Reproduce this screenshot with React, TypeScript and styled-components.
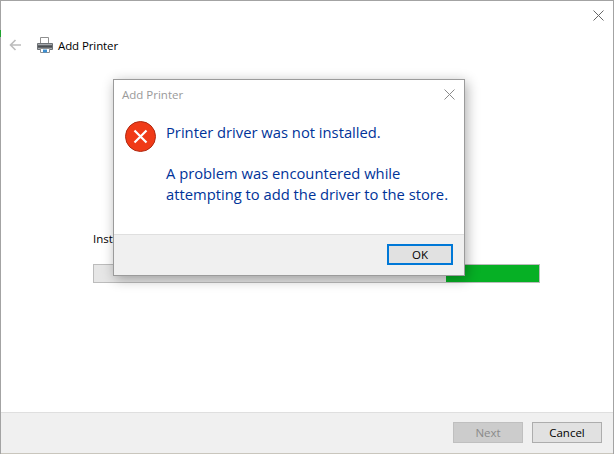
import React from "react";
import styled, { createGlobalStyle } from "styled-components";

const Global = createGlobalStyle`
  html, body { margin: 0; padding: 0; background: #fff; }
  #root { width: 614px; height: 454px; }
  * { box-sizing: border-box; }
`;

const Window = styled.div`
  position: relative;
  width: 614px;
  height: 454px;
  background: #fff;
  border: 1px solid #a3a3a3;
  border-bottom: 0;
  font-family: "Open Sans", "Noto Sans", sans-serif;
  color: #000;
  display: flex;
  flex-direction: column;
  overflow: visible;
`;

const EdgeMark = styled.div`
  position: absolute;
  left: -1px;
  top: 29px;
  width: 1px;
  height: 7px;
  background: #1fa32f;
`;

const TitleBar = styled.div`
  height: 30px;
  display: flex;
  justify-content: flex-end;
  align-items: flex-start;
  padding: 9px 9px 0 0;
`;

const CloseGlyph = styled.svg<{ $c: string }>`
  display: block;
  stroke: ${(p) => p.$c};
  fill: none;
`;

const Header = styled.div`
  height: 28px;
  display: flex;
  align-items: center;
  padding-left: 8px;
`;

const BackArrow = styled.svg`
  display: block;
  margin-right: 16px;
`;

const HeaderTitle = styled.span`
  font-size: 11.5px;
  margin-left: 5px;
  letter-spacing: -0.1px;
`;

const Main = styled.div`
  flex: 1;
  padding: 171px 73px 0 92px;
`;

const Status = styled.div`
  font-size: 11.5px;
  line-height: 18px;
  margin-bottom: 16px;
`;

const Progress = styled.div`
  height: 19px;
  background: #e6e6e6;
  border: 1px solid #bcbcbc;
`;

const ProgressFill = styled.div`
  height: 100%;
  margin-left: auto;
  background: #06b025;
`;

const Footer = styled.div`
  height: 42px;
  background: #f0f0f0;
  border-top: 1px solid #dfdfdf;
  border-bottom: 1px solid #c9c6bd;
  display: flex;
  justify-content: flex-end;
  align-items: flex-start;
  gap: 9px;
  padding: 9px 11px 0 0;
`;

const Btn = styled.button<{ $disabled?: boolean }>`
  width: 70px;
  height: 21px;
  padding: 0;
  font: 11.5px "Open Sans", "Noto Sans", sans-serif;
  line-height: 17px;
  background: ${(p) => (p.$disabled ? "#cccccc" : "#e1e1e1")};
  border: 1px solid ${(p) => (p.$disabled ? "#bfbfbf" : "#adadad")};
  color: ${(p) => (p.$disabled ? "#8a8a8a" : "#000")};
`;

const Dialog = styled.div`
  position: absolute;
  left: 112px;
  top: 78px;
  width: 352px;
  height: 197px;
  background: #fff;
  border: 1px solid #9b9b9b;
  box-shadow: 2px 3px 12px rgba(0, 0, 0, 0.32);
  display: flex;
  flex-direction: column;
`;

const DialogTitle = styled.div`
  height: 28px;
  display: flex;
  align-items: center;
  justify-content: space-between;
  padding: 0 9px 0 8px;
  color: #9a9a9a;
  font-size: 11.5px;
`;

const DialogBody = styled.div`
  flex: 1;
  display: flex;
  padding: 13px 12px 0 11px;
  gap: 10px;
`;

const ErrorIcon = styled.svg`
  display: block;
  flex: none;
`;

const Message = styled.div`
  color: #003399;
  font-size: 14.75px;
  line-height: 21px;
  margin-top: 1px;
`;

const Para = styled.p`
  margin: 0 0 20px;
`;

const DialogFooter = styled.div`
  height: 41px;
  background: #f0f0f0;
  border-top: 1px solid #dfdfdf;
  display: flex;
  justify-content: flex-end;
  padding: 9px 11px 0 0;
`;

const OkBtn = styled.button`
  width: 66px;
  height: 21px;
  padding: 0;
  background: #e1e1e1;
  border: 2px solid #0078d7;
  font: 11.5px "Open Sans", "Noto Sans", sans-serif;
  color: #000;
`;

const Close = ({ c, s }: { c: string; s: number }) => (
  <CloseGlyph $c={c} width={s} height={s} viewBox={`0 0 ${s} ${s}`}>
    <path d={`M0.5 0.5L${s - 0.5} ${s - 0.5}M${s - 0.5} 0.5L0.5 ${s - 0.5}`} strokeWidth="1" />
  </CloseGlyph>
);

const PrinterIcon = () => (
  <svg width="16" height="16" viewBox="0 0 16 16" style={{ display: "block" }}>
    <path d="M3.5 0.5h8v6h-8z" fill="#fff" stroke="#8f8f8f" />
    <path d="M0.5 6.5h15v6h-15z" fill="#a6a9ad" stroke="#6d7175" />
    <path d="M1 9.5h14" stroke="#4a4e52" strokeWidth="2.4" />
    <path d="M3.5 11.5h9v4h-9z" fill="#fff" stroke="#8f8f8f" />
    <path d="M6 12.5h4v3H6z" fill="#3d8fd1" />
  </svg>
);

export default function App() {
  return (
    <>
      <Global />
      <Window>
        <EdgeMark />
        <TitleBar>
          <Close c="#666" s={11} />
        </TitleBar>
        <Header>
          <BackArrow width="12" height="12" viewBox="0 0 12 12">
            <path d="M12 6H1.5M6.5 1L1.5 6l5 5" fill="none" stroke="#bcbcbc" strokeWidth="1.6" />
          </BackArrow>
          <PrinterIcon />
          <HeaderTitle>Add Printer</HeaderTitle>
        </Header>
        <Main>
          <Status>Installing printer...</Status>
          <Progress>
            <ProgressFill style={{ width: `${(93 / 445) * 100}%` }} />
          </Progress>
        </Main>
        <Footer>
          <Btn $disabled disabled>Next</Btn>
          <Btn>Cancel</Btn>
        </Footer>
        <Dialog>
          <DialogTitle>
            <span>Add Printer</span>
            <Close c="#8a8a8a" s={11} />
          </DialogTitle>
          <DialogBody>
            <ErrorIcon width="31" height="31" viewBox="0 0 31 31">
              <circle cx="15.5" cy="15.5" r="15" fill="#f03a17" stroke="#b02a12" />
              <path d="M9.5 9.5l12 12M21.5 9.5l-12 12" stroke="#fff" strokeWidth="2.2" fill="none" />
            </ErrorIcon>
            <Message>
              <Para>Printer driver was not installed.</Para>
              <Para>A problem was encountered while<br />attempting to add the driver to the store.</Para>
            </Message>
          </DialogBody>
          <DialogFooter>
            <OkBtn>OK</OkBtn>
          </DialogFooter>
        </Dialog>
      </Window>
    </>
  );
}
